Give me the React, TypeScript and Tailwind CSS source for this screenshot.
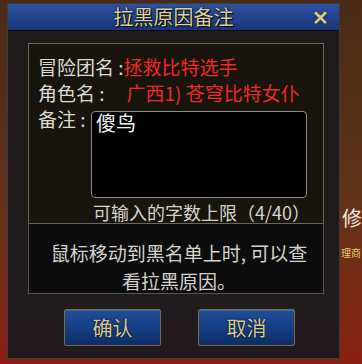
import React from "react";

const font = { fontFamily: '"Noto Sans CJK SC", "Noto Sans", sans-serif' };

function GameButton({ label }: { label: string }) {
  return (
    <button className="flex h-[37px] w-[97px] items-center justify-center rounded-[2px] border border-[#7a6a48] bg-gradient-to-b from-[#1f4e98] via-[#163f85] to-[#0e2c66] text-[20px] leading-none text-[#d9c98f] shadow-[inset_0_1px_0_#3a68b0] [text-shadow:0_0_2px_#000]">
      {label}
    </button>
  );
}

export default function App() {
  return (
    <div
      className="relative h-[364px] w-[362px] overflow-hidden bg-gradient-to-b from-[#4a2a16] via-[#5e3318] to-[#8a1e12]"
      style={font}
    >
      {/* background game text peeking out */}
      <span className="absolute left-[342px] top-[208px] text-[20px] leading-none text-[#e8e8e0]">修</span>
      <span className="absolute left-[341px] top-[248px] whitespace-nowrap text-[10px] leading-none text-[#e0d070]">
        理商
      </span>

      <div className="absolute left-[7px] top-[3px] flex h-[356px] w-[333px] flex-col border border-[#3c3c3c] bg-[#1b1a1c]/95">
        {/* title bar */}
        <div className="relative flex h-[27px] shrink-0 items-center justify-center border-b border-[#0a0a14] bg-gradient-to-b from-[#2c52a4] to-[#1a3676]">
          <span className="text-[20px] leading-none text-[#ddd09a] [text-shadow:0_0_2px_#000,1px_1px_1px_#000]">
            拉黑原因备注
          </span>
          <span className="absolute right-[10px] top-[3px] text-[20px] font-bold leading-none text-[#d8cc8c] [text-shadow:0_0_2px_#000]">
            ✕
          </span>
        </div>

        {/* upper panel */}
        <div className="ml-[20px] mt-[12px] flex h-[181px] w-[296px] flex-col border border-[#66665c] bg-[#17150e] pl-[9px] pt-[10px] text-[19px] leading-[26px] text-[#dcdcd4]">
          <div className="flex">
            <span>冒险团名 :</span>
            <span className="text-[#f02828]">拯救比特选手</span>
          </div>
          <div className="flex">
            <span>角色名 :</span>
            <span className="ml-[22px] text-[#f02828]">广西1) 苍穹比特女仆</span>
          </div>
          <div className="flex items-start">
            <span className="w-[53px] shrink-0">备注 :</span>
            <div className="mt-[5px] h-[87px] w-[216px] rounded-[4px] border border-[#8a8a88] bg-black pl-[4px] text-[20px] leading-[22px] text-[#f4f4f4]">
              傻鸟
            </div>
          </div>
          <div className="ml-[55px] mt-[2px] whitespace-nowrap text-[18px] leading-[24px] text-[#d4d4cc]">
            可输入的字数上限（4/40）
          </div>
        </div>

        {/* lower panel */}
        <div className="ml-[20px] h-[70px] w-[296px] border-x border-b border-[#55554e] bg-[#0c0c0c] pl-[6px] pt-[14px] text-center text-[19px] leading-[29px] text-[#d4d4cc]">
          <div>鼠标移动到黑名单上时, 可以查</div>
          <div className="-mt-[1px]">看拉黑原因。</div>
        </div>

        <div className="ml-[56px] mt-[15px] flex gap-[37px]">
          <GameButton label="确认" />
          <GameButton label="取消" />
        </div>
      </div>
    </div>
  );
}
